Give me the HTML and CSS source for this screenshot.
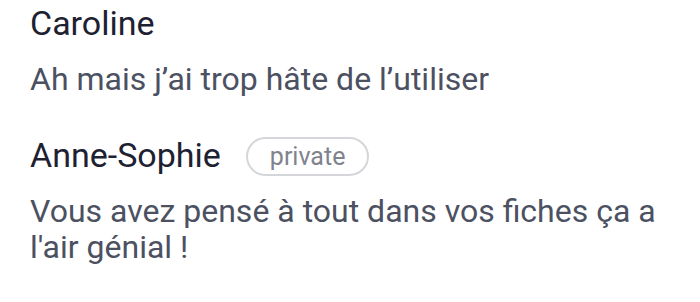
FILE: index.html
```html
<!DOCTYPE html>
<html lang="fr">
<head>
    <meta charset="UTF-8">
    <meta name="viewport" content="width=device-width, initial-scale=1.0">
    <title>Commentaires</title>
    <link rel="stylesheet" href="styles.css">
</head>
<body>
    <div class="comments">
        <div class="comment">
            <div class="comment-header">
                <span class="author">Caroline</span>
            </div>
            <p class="comment-text">Ah mais j’ai trop hâte de l’utiliser</p>
        </div>

        <div class="comment">
            <div class="comment-header">
                <span class="author">Anne-Sophie</span>
                <span class="badge">private</span>
            </div>
            <p class="comment-text">Vous avez pensé à tout dans vos fiches ça a l'air génial !</p>
        </div>
    </div>
</body>
</html>
```

FILE: styles.css
```css
body {
    font-family: Roboto, "Noto Sans", sans-serif;
    margin: 0;
    background: white;
}

.comments {
    padding: 3px 30px 0 30px;
    width: 640px;
    display: flex;
    flex-direction: column;
    gap: 38px;
}

.comment-header {
    display: flex;
    align-items: center;
    gap: 25px;
    height: 40px;
}

.author {
    font-size: 34px;
    line-height: 40px;
    color: #1d2131;
}

.badge {
    font-size: 25px;
    line-height: 35px;
    color: #7f838d;
    border: 2px solid #d5d6da;
    border-radius: 20px;
    padding: 0 22px;
    margin-top: 3px;
}

.comment-text {
    margin: 18px 0 0 0;
    font-size: 32px;
    line-height: 36px;
    color: #4c5162;
}
```
